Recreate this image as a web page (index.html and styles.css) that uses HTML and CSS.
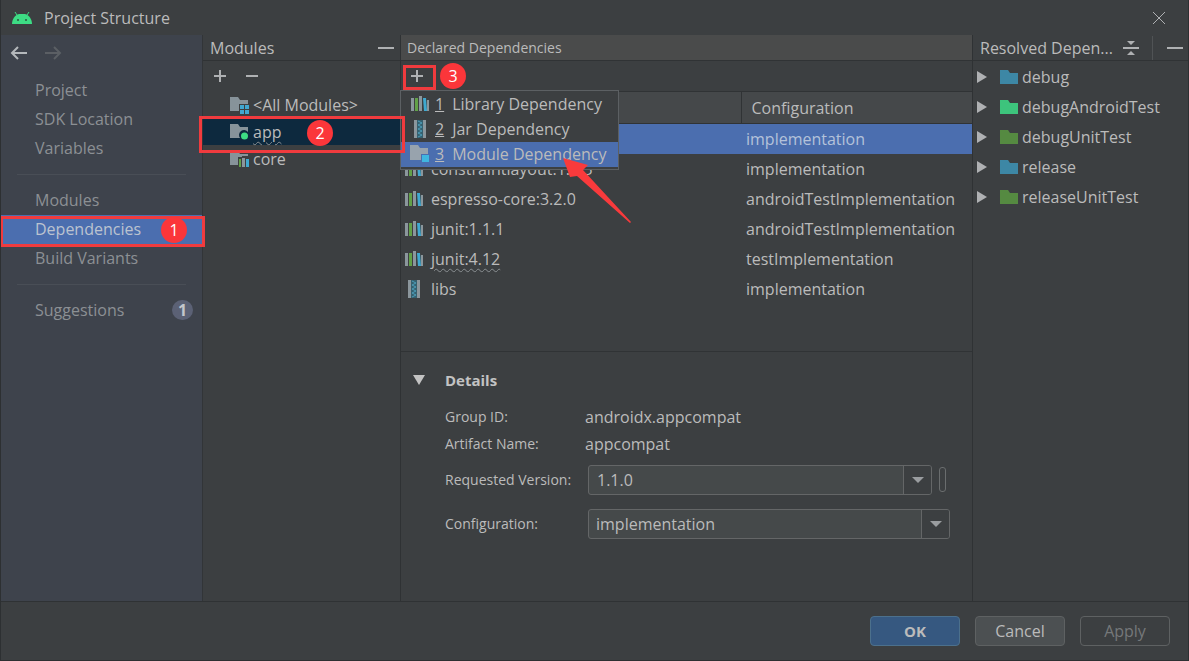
FILE: index.html
```html
<!DOCTYPE html>
<html lang="en">
<head>
<meta charset="utf-8">
<title>Project Structure</title>
<link rel="stylesheet" href="styles.css">
</head>
<body>
<svg class="defs" aria-hidden="true">
  <symbol id="i-lib" viewBox="0 0 18 16">
    <rect x="0" y="2" width="3" height="13" fill="#8b969c"/><rect x="4" y="2" width="3" height="13" fill="#62a048"/>
    <rect x="8" y="0" width="3" height="15" fill="#8b969c"/><path d="M12 2h3l1 13h-3z" fill="#3fa9d0"/>
    <rect x="16" y="4" width="2" height="11" fill="#8b969c"/>
  </symbol>
  <symbol id="i-jar" viewBox="0 0 18 18">
    <path d="M3 0h3v18H3zM12 0h3v18h-3z" fill="#8b969c"/><path d="M6 0h6v18H6z" fill="#35606f"/>
    <path d="M7 1l4 2-4 2 4 2-4 2 4 2-4 2 4 2-4 2" fill="none" stroke="#4c9db8" stroke-width="1"/>
  </symbol>
  <symbol id="i-folder" viewBox="0 0 18 14"><path d="M0 0h8l2 3h8v11H0z" fill="currentColor"/></symbol>
  <symbol id="i-all" viewBox="0 0 20 18">
    <path d="M0 0h8l2 3h8v4H9v7H0z" fill="#87939a"/>
    <path d="M10 8h4v4h-4zM15 8h4v4h-4zM10 13h4v4h-4zM15 13h4v4h-4z" fill="#40a7d1"/>
  </symbol>
  <symbol id="i-app" viewBox="0 0 20 18">
    <path d="M0 0h8l2 3h8v5a5 5 0 0 0-8 6H0z" fill="#87939a"/><circle cx="14.500" cy="12" r="3.500" fill="#3ddc84"/>
  </symbol>
  <symbol id="i-core" viewBox="0 0 20 18">
    <path d="M0 0h8l2 3h8v2h-6v1H8v8H0z" fill="#87939a"/>
    <path d="M9 8h2v8H9z" fill="#62a048"/><path d="M12 7h3v9h-3z" fill="#8b969c"/><path d="M16 8h3v8h-3z" fill="#3fa9d0"/>
  </symbol>
  <symbol id="i-module" viewBox="0 0 20 18">
    <path d="M0 0h8l2 3h8v6h-7v6H0z" fill="#98a3ad"/><path d="M12 10h7v7h-7z" fill="#40b6e0"/>
  </symbol>
  <symbol id="i-plus" viewBox="0 0 14 14"><path d="M7 1v12M1 7h12" stroke="currentColor" stroke-width="2" fill="none"/></symbol>
  <symbol id="i-minus" viewBox="0 0 14 14"><path d="M1 7h12" stroke="currentColor" stroke-width="2" fill="none"/></symbol>
  <symbol id="i-hide" viewBox="0 0 16 14"><path d="M0 7h16" stroke="currentColor" stroke-width="2" fill="none"/></symbol>
  <symbol id="i-right" viewBox="0 0 10 12"><path d="M0 0l10 6-10 6z" fill="currentColor"/></symbol>
  <symbol id="i-down" viewBox="0 0 12 12"><path d="M0 1h12L6 11z" fill="currentColor"/></symbol>
  <symbol id="i-drop" viewBox="0 0 12 8"><path d="M0 1h12L6 7z" fill="currentColor"/></symbol>
</svg>

<header class="titlebar">
  <svg class="android" width="20" height="13" viewBox="0 0 20 13"><path d="M0 13C0 8 3 4 7 3h6c4 1 7 5 7 10z" fill="#3ddc84"/><path d="M5 4L3 1M15 4l2-3" stroke="#3ddc84" stroke-width="1"/><circle cx="6" cy="9" r="1" fill="#2b5540"/><circle cx="14" cy="9" r="1" fill="#2b5540"/></svg>
  <h1 class="title">Project Structure</h1>
  <button class="icon-btn close" aria-label="Close"><svg width="14" height="14" viewBox="0 0 14 14"><path d="M1 1l12 12M13 1L1 13" stroke="currentColor" stroke-width="1"/></svg></button>
</header>

<main class="workspace">
  <nav class="sidebar">
    <div class="history">
      <button class="icon-btn" aria-label="Back"><svg width="18" height="14" viewBox="0 0 18 14"><path d="M8 1L2 7l6 6M2 7h15" fill="none" stroke="#b4b8bb" stroke-width="2"/></svg></button>
      <button class="icon-btn" aria-label="Forward" disabled><svg width="18" height="14" viewBox="0 0 18 14"><path d="M10 1l6 6-6 6M16 7H1" fill="none" stroke="#5b5f64" stroke-width="2"/></svg></button>
    </div>
    <a class="nav-item" href="#project">Project</a>
    <a class="nav-item" href="#sdk">SDK Location</a>
    <a class="nav-item" href="#variables">Variables</a>
    <hr class="rule">
    <a class="nav-item" href="#modules">Modules</a>
    <a class="nav-item current" href="#dependencies">Dependencies</a>
    <a class="nav-item" href="#build">Build Variants</a>
    <hr class="rule">
    <a class="nav-item" href="#suggestions">Suggestions <span class="count">1</span></a>
  </nav>

  <section class="panel modules">
    <div class="panel-head"><h2 class="panel-title">Modules</h2><button class="icon-btn" aria-label="Hide modules"><svg width="16" height="14"><use href="#i-hide"/></svg></button></div>
    <div class="toolbar">
      <button class="icon-btn" aria-label="Add module"><svg width="14" height="14"><use href="#i-plus"/></svg></button>
      <button class="icon-btn" aria-label="Remove module"><svg width="14" height="14"><use href="#i-minus"/></svg></button>
    </div>
    <ul class="tree">
      <li class="module"><svg width="20" height="18"><use href="#i-all"/></svg>&lt;All Modules&gt;</li>
      <li class="module selected"><svg width="20" height="18"><use href="#i-app"/></svg><span class="wavy">app</span></li>
      <li class="module"><svg width="20" height="18"><use href="#i-core"/></svg>core</li>
    </ul>
  </section>

  <section class="panel declared">
    <div class="panel-head bright"><h2 class="panel-title small">Declared Dependencies</h2></div>
    <div class="toolbar add-bar">
      <button class="icon-btn" aria-label="Add dependency"><svg width="14" height="14"><use href="#i-plus"/></svg></button>
      <ul class="menu">
        <li><button class="menu-item"><svg width="20" height="16"><use href="#i-lib"/></svg><u>1</u><span>Library Dependency</span></button></li>
        <li><button class="menu-item"><svg width="20" height="18"><use href="#i-jar"/></svg><u>2</u><span>Jar Dependency</span></button></li>
        <li><button class="menu-item active"><svg width="20" height="18"><use href="#i-module"/></svg><u>3</u><span>Module Dependency</span></button></li>
      </ul>
    </div>
    <table class="deps">
      <thead><tr><th></th><th>Configuration</th></tr></thead>
      <tbody>
        <tr class="picked"><td></td><td>implementation</td></tr>
        <tr><td><span class="dep"><svg width="18" height="16"><use href="#i-lib"/></svg>constraintlayout:1.1.3</span></td><td>implementation</td></tr>
        <tr><td><span class="dep"><svg width="18" height="16"><use href="#i-lib"/></svg>espresso-core:3.2.0</span></td><td>androidTestImplementation</td></tr>
        <tr><td><span class="dep"><svg width="18" height="16"><use href="#i-lib"/></svg>junit:1.1.1</span></td><td>androidTestImplementation</td></tr>
        <tr><td><span class="dep"><svg width="18" height="16"><use href="#i-lib"/></svg><span class="wavy">junit:4.12</span></span></td><td>testImplementation</td></tr>
        <tr><td><span class="dep"><svg width="18" height="18"><use href="#i-jar"/></svg>libs</span></td><td>implementation</td></tr>
      </tbody>
    </table>
    <div class="details">
      <h3 class="details-title"><svg width="12" height="12"><use href="#i-down"/></svg>Details</h3>
      <div class="facts">
        <span class="label">Group ID:</span><span>androidx.appcompat</span>
        <span class="label">Artifact Name:</span><span>appcompat</span>
      </div>
      <div class="fields">
        <label class="label" for="version">Requested Version:</label>
        <div class="version-row">
          <div class="combo"><input class="field" id="version" value="1.1.0"><button class="drop" aria-label="Show versions"><svg width="12" height="8"><use href="#i-drop"/></svg></button></div>
          <button class="slim" aria-label="Version variable"></button>
        </div>
        <label class="label" for="config">Configuration:</label>
        <div class="combo"><select class="field" id="config"><option>implementation</option></select><span class="drop cover"><svg width="12" height="8"><use href="#i-drop"/></svg></span></div>
      </div>
    </div>
  </section>

  <section class="panel resolved">
    <div class="panel-head">
      <h2 class="panel-title">Resolved Depen...</h2>
      <button class="icon-btn collapse" aria-label="Collapse all"><svg width="16" height="16" viewBox="0 0 16 16"><path d="M4 1h8L8 5zM4 15h8l-4-4zM0 7h16v2H0z" fill="currentColor"/></svg></button>
      <span class="divider"></span>
      <button class="icon-btn" aria-label="Hide resolved"><svg width="16" height="14"><use href="#i-hide"/></svg></button>
    </div>
    <ul class="variants">
      <li class="variant blue"><svg class="twist" width="10" height="12"><use href="#i-right"/></svg><svg width="18" height="14"><use href="#i-folder"/></svg><span>debug</span></li>
      <li class="variant mint"><svg class="twist" width="10" height="12"><use href="#i-right"/></svg><svg width="18" height="14"><use href="#i-folder"/></svg><span>debugAndroidTest</span></li>
      <li class="variant green"><svg class="twist" width="10" height="12"><use href="#i-right"/></svg><svg width="18" height="14"><use href="#i-folder"/></svg><span>debugUnitTest</span></li>
      <li class="variant blue"><svg class="twist" width="10" height="12"><use href="#i-right"/></svg><svg width="18" height="14"><use href="#i-folder"/></svg><span>release</span></li>
      <li class="variant green"><svg class="twist" width="10" height="12"><use href="#i-right"/></svg><svg width="18" height="14"><use href="#i-folder"/></svg><span>releaseUnitTest</span></li>
    </ul>
  </section>
</main>

<footer class="actions">
  <button class="btn primary">OK</button>
  <button class="btn">Cancel</button>
  <button class="btn off" disabled>Apply</button>
</footer>

<div class="mark box-nav"></div><span class="step step-nav">1</span>
<div class="mark box-app"></div><span class="step step-app">2</span>
<div class="mark box-add"></div><span class="step step-add">3</span>
<svg class="pointer" width="70" height="66" viewBox="0 0 70 66"><path d="M0 0l25 7-5 5 48 52-1 1L14 18l-7 1z" fill="#f93a3c"/></svg>
</body>
</html>
```
FILE: styles.css
```css
* { box-sizing: border-box; }
body {
  position: relative;
  display: flex;
  flex-direction: column;
  min-height: 100vh;
  margin: 0;
  border: 1px solid #2d3032;
  border-top: 0;
  background: #3c3f41;
  color: #bbbbbb;
  font: 16px/20px "Open Sans", "Noto Sans", sans-serif;
}
h1, h2, h3, ul { margin: 0; padding: 0; font-size: inherit; font-weight: 400; list-style: none; }
button, input, select { font: inherit; color: inherit; }
svg { display: block; flex: none; }
.defs { position: absolute; width: 0; height: 0; }
.icon-btn { display: flex; padding: 0; border: 0; background: none; color: #afb1b3; }
.titlebar { display: flex; align-items: center; height: 35px; padding: 0 22px 0 11px; }
.title { flex: 1; margin-left: 12px; }
.workspace { display: flex; flex: 1; border-bottom: 1px solid #2f3234; }

.sidebar { flex: none; width: 202px; border-right: 1px solid #323538; background: #3e434c; color: #8c9094; }
.history { display: flex; gap: 16px; height: 41px; padding: 11px 9px; }
.nav-item { display: flex; align-items: center; justify-content: space-between; height: 29px; padding: 0 9px 2px 34px; color: inherit; text-decoration: none; }
.current { background: #4b6eaf; color: #bbc3d0; }
.rule { height: 1px; margin: 11px 16px; border: 0; background: #494e56; }
.count { width: 21px; border-radius: 10px; background: #5b6175; color: #c3c6cc; font-weight: 700; text-align: center; }

.panel { border-right: 1px solid #2f3234; }
.panel-head { display: flex; align-items: center; height: 26px; padding: 0 6px 0 7px; border-bottom: 1px solid #303335; }
.panel-title { flex: 1; white-space: nowrap; }
.bright { padding-left: 6px; background: #4a4b4b; }
.small, .label { font-size: 14px; }
.toolbar { display: flex; align-items: center; gap: 18px; height: 30px; padding: 0 10px; }
.modules { flex: none; width: 198px; }
.module { display: flex; align-items: center; gap: 3px; height: 27px; padding-left: 27px; }
.module svg { margin-top: 3px; }
.selected { background: #0d293e; }
.wavy { text-decoration: underline wavy #8a8f92 1px; text-underline-offset: 3px; }

.declared { display: flex; flex: 1; flex-direction: column; min-width: 0; }
.add-bar { position: relative; padding: 0 9px; }
.menu { position: absolute; z-index: 2; top: 29px; left: -1px; width: 219px; padding: 1px 0 2px; border: 1px solid #5c6063; background: #3c3f41; }
.menu-item { display: flex; align-items: center; width: 100%; height: 25px; padding: 0 9px 1px; border: 0; background: none; text-align: left; white-space: nowrap; }
.menu-item u { margin: 0 8px 0 5px; }
.active { background: #4b6eaf; }
.deps { width: 100%; border-collapse: collapse; table-layout: fixed; }
.deps th { height: 32px; padding: 0 10px; border: 1px solid #303335; border-width: 1px 0; background: #45484a; font-weight: 400; text-align: left; }
.deps th + th { width: 231px; border-left-width: 1px; }
.deps td { height: 30px; padding: 0 5px; }
.deps td:first-child { padding: 0 4px; }
.dep { display: flex; align-items: center; gap: 8px; }
.picked { background: #4b6eaf; color: #b4c2da; }

.details { flex: 1; margin-top: 47px; padding: 18px 22px 0 12px; border-top: 1px solid #303335; }
.details-title { display: flex; align-items: center; gap: 20px; color: #c3c3c3; font-size: 15px; font-weight: 700; }
.facts, .fields { display: grid; align-items: center; padding-left: 32px; }
.facts { grid-template-columns: 140px 1fr; grid-auto-rows: 27px; margin-top: 14px; }
.fields { grid-template-columns: 143px 1fr; row-gap: 14px; margin-top: 7px; }
.version-row { display: flex; align-items: center; gap: 7px; }
.combo { position: relative; display: flex; flex: 1; height: 30px; border: 1px solid #646667; border-radius: 3px; background: #45494a; overflow: hidden; }
.field { flex: 1; min-width: 0; padding: 0 8px; border: 0; background: none; appearance: none; }
select.field { padding: 0 7px; }
.drop { display: flex; align-items: center; justify-content: center; width: 28px; padding: 0; border: 0; border-left: 1px solid #646667; background: #3c3f41; color: #9a9da0; }
.cover { position: absolute; top: 0; right: 0; bottom: 0; pointer-events: none; }
.slim { width: 7px; height: 25px; margin-right: 4px; padding: 0; border: 1px solid #6a6d6e; border-radius: 3px; background: none; }

.resolved { flex: none; width: 215px; border-right: 0; }
.resolved .panel-head { padding-right: 5px; }
.collapse { margin-right: 13px; }
.divider { width: 1px; height: 24px; margin-right: 14px; background: #505355; }
.variants { padding-top: 1px; }
.variant { display: flex; align-items: center; height: 30px; padding-left: 4px; }
.variant span { margin-left: 4px; color: #bbbbbb; }
.variant .twist { margin-right: 13px; color: #afb1b3; }
.blue { color: #3d87a5; }
.mint { color: #3dc47c; }
.green { color: #558a41; }

.actions { display: flex; justify-content: flex-end; gap: 15px; padding: 14px 18px; }
.btn { width: 90px; height: 30px; padding: 0; border: 1px solid #5e6162; border-radius: 4px; background: #4c5052; }
.primary { border-color: #4c708c; background: #365880; font-size: 15px; font-weight: 700; }
.off { background: none; color: #75787a; }

.mark { position: absolute; border: 3px solid #f03b3e; pointer-events: none; z-index: 3; }
.step { position: absolute; z-index: 4; width: 26px; height: 26px; border-radius: 50%; background: #fb363a; color: #fff; line-height: 26px; text-align: center; }
.box-nav { top: 216px; left: -1px; width: 205px; height: 31px; }
.step-nav { top: 217px; left: 160px; }
.box-app { top: 116px; left: 198px; width: 206px; height: 37px; }
.step-app { top: 120px; left: 306px; }
.box-add { top: 65px; left: 402px; width: 33px; height: 25px; }
.step-add { top: 63px; left: 439px; }
.pointer { position: absolute; z-index: 3; top: 158px; left: 562px; }
```
